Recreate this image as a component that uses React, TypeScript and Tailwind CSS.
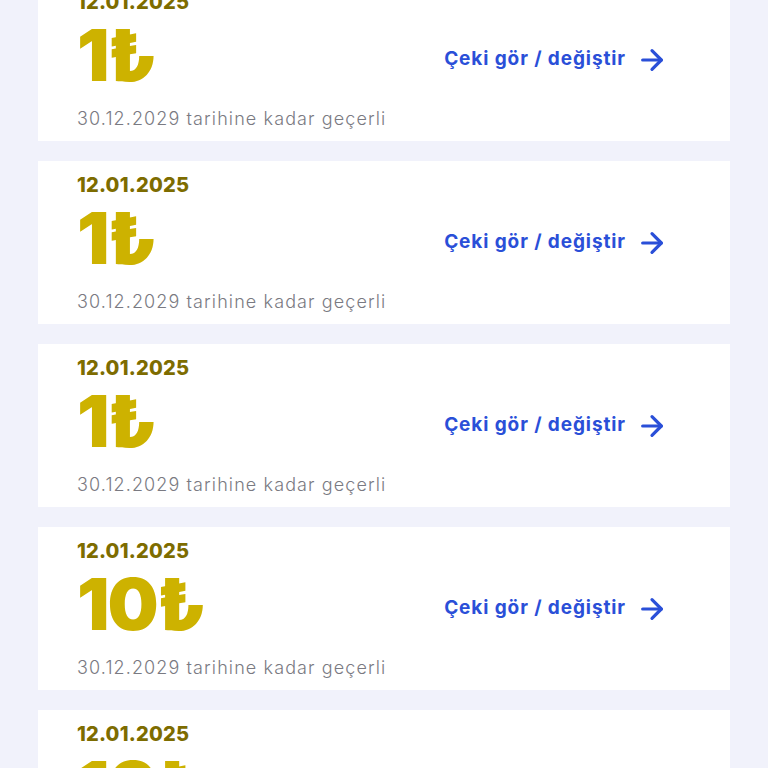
import { ArrowRight } from 'lucide-react'

type Voucher = { date: string; amount: string; expires: string }

const vouchers: Voucher[] = [
  { date: '12.01.2025', amount: '1', expires: '30.12.2029' },
  { date: '12.01.2025', amount: '1', expires: '30.12.2029' },
  { date: '12.01.2025', amount: '1', expires: '30.12.2029' },
  { date: '12.01.2025', amount: '10', expires: '30.12.2029' },
  { date: '12.01.2025', amount: '10', expires: '30.12.2029' },
]

function VoucherCard({ v }: { v: Voucher }) {
  return (
    <div className="flex h-[163px] shrink-0 items-center justify-between bg-white pl-[39px] pr-[62px]">
      <div className="flex flex-col">
        <span className="text-[20px] leading-[24px] font-extrabold tracking-[0.2px] text-[#7d6c00]">{v.date}</span>
        <span className="mt-[8px] text-[72px] leading-[66px] font-black tracking-[-2px] text-[#cdb200]">
          {v.amount}₺
        </span>
        <span className="mt-[20px] text-[18px] leading-[22px] font-light tracking-[1.1px] text-[#7a7a82]">
          {v.expires} tarihine kadar geçerli
        </span>
      </div>
      <button className="flex items-center gap-[10px] text-[19px] font-bold tracking-[0.9px] text-[#2a4fd8]">
        Çeki gör / değiştir
        <ArrowRight className="h-[32px] w-[32px]" strokeWidth={2.4} />
      </button>
    </div>
  )
}

export default function App() {
  return (
    <div className="h-[768px] overflow-hidden bg-[#f1f2fb] font-['Inter',sans-serif]">
      <div className="mx-[38px] -mt-[22px] flex flex-col gap-[20px]">
        {vouchers.map((v, i) => (
          <VoucherCard key={i} v={v} />
        ))}
      </div>
    </div>
  )
}
